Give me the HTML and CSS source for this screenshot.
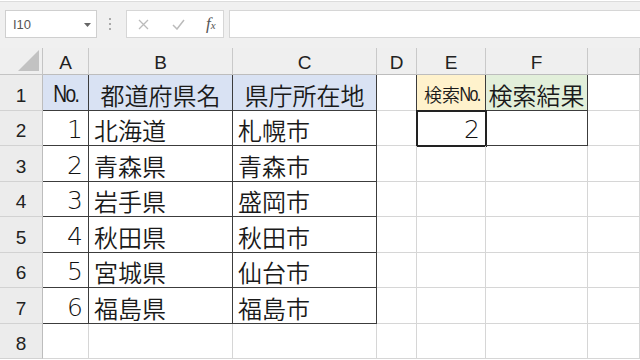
FILE: index.html
```html
<!DOCTYPE html>
<html lang="ja">
<head>
  <meta charset="UTF-8">
  <title>検索シート</title>
  <link rel="stylesheet" href="styles.css">
</head>
<body>

  <div class="toolbar">
    <div class="namebox">
      <span>I10</span>
      <svg class="caret" width="7" height="4" viewBox="0 0 7 4"><polygon points="0,0 7,0 3.5,4" fill="#666"/></svg>
    </div>
    <div class="grip">
      <svg width="3" height="12" viewBox="0 0 3 12"><rect x="0" y="0" width="2" height="2" fill="#aaa"/><rect x="0" y="5" width="2" height="2" fill="#aaa"/><rect x="0" y="10" width="2" height="2" fill="#aaa"/></svg>
    </div>
    <div class="fbtns">
      <svg width="11" height="11" viewBox="0 0 11 11"><path d="M1 1 L10 10 M10 1 L1 10" stroke="#bbb" stroke-width="1.3" fill="none"/></svg>
      <svg width="13" height="11" viewBox="0 0 13 11"><path d="M1 6 L5 10 L12 1" stroke="#bbb" stroke-width="1.5" fill="none"/></svg>
      <span class="fx">f<small>x</small></span>
    </div>
    <div class="formula"></div>
  </div>

  <div class="sheet">
    <!-- header -->
    <div class="corner"><div class="tri"></div></div>
    <div class="hd">A</div>
    <div class="hd">B</div>
    <div class="hd">C</div>
    <div class="hd">D</div>
    <div class="hd">E</div>
    <div class="hd">F</div>
    <div class="hd"></div>

    <!-- row 1 -->
    <div class="rh">1</div>
    <div class="c t blue ctr"><span class="no">No.</span></div>
    <div class="c t blue ctr">都道府県名</div>
    <div class="c t blue ctr">県庁所在地</div>
    <div class="c dr"></div>
    <div class="c t yellow ctr small">検索<span class="no">No.</span></div>
    <div class="c t green ctr">検索結果</div>
    <div class="c"></div>

    <!-- row 2 -->
    <div class="rh">2</div>
    <div class="c t num">1</div>
    <div class="c t">北海道</div>
    <div class="c t">札幌市</div>
    <div class="c dr"></div>
    <div class="c t num sel">2</div>
    <div class="c t"></div>
    <div class="c"></div>

    <div class="rh">3</div>
    <div class="c t num">2</div>
    <div class="c t">青森県</div>
    <div class="c t">青森市</div>
    <div class="c"></div><div class="c"></div><div class="c"></div><div class="c"></div>

    <div class="rh">4</div>
    <div class="c t num">3</div>
    <div class="c t">岩手県</div>
    <div class="c t">盛岡市</div>
    <div class="c"></div><div class="c"></div><div class="c"></div><div class="c"></div>

    <div class="rh">5</div>
    <div class="c t num">4</div>
    <div class="c t">秋田県</div>
    <div class="c t">秋田市</div>
    <div class="c"></div><div class="c"></div><div class="c"></div><div class="c"></div>

    <div class="rh">6</div>
    <div class="c t num">5</div>
    <div class="c t">宮城県</div>
    <div class="c t">仙台市</div>
    <div class="c"></div><div class="c"></div><div class="c"></div><div class="c"></div>

    <div class="rh">7</div>
    <div class="c t num">6</div>
    <div class="c t">福島県</div>
    <div class="c t">福島市</div>
    <div class="c"></div><div class="c"></div><div class="c"></div><div class="c"></div>

    <div class="rh">8</div>
    <div class="c"></div><div class="c"></div><div class="c"></div><div class="c"></div>
    <div class="c"></div><div class="c"></div><div class="c"></div>
  </div>

</body>
</html>
```

FILE: styles.css
```css
* { box-sizing: border-box; }
html, body { margin: 0; width: 640px; height: 360px; overflow: hidden; background: #fff; }
body { font-family: "Noto Sans CJK JP", "Noto Sans", sans-serif; color: #222; }

/* formula bar area */
.toolbar { height: 48px; background: #f0f0f0; border-top: 1px solid #dcdcdc; margin-top: 1px; display: flex; align-items: flex-start; padding: 8px 0 0 5px; }
.namebox { width: 92px; height: 28px; background: #fff; border: 1px solid #cfcfcf; display: flex; align-items: center; justify-content: space-between; padding: 0 5px 0 7px; font-family: "Liberation Sans", sans-serif; font-size: 13px; color: #555; }
.caret { margin-top: 1px; }
.grip { width: 29px; height: 28px; display: flex; align-items: center; justify-content: center; padding-right: 3px; }
.fbtns { width: 98px; height: 28px; background: #fff; border: 1px solid #d6d6d6; display: flex; align-items: center; padding-left: 11px; gap: 23px; }
.fx { font-family: "Liberation Serif", serif; font-style: italic; font-size: 17px; color: #555; margin-left: -2px; }
.fx small { font-size: 11px; }
.formula { flex: 1; height: 28px; background: #fff; border: 1px solid #d6d6d6; margin-left: 5px; margin-right: -2px; }

/* grid */
.sheet { display: grid; grid-template-columns: 43px 46px 144px 144px 40px 69px 102px 1fr; grid-template-rows: 27px 36px 35px 36px 35px 36px 35px 36px 35px; margin-top: -1px; }
.corner { background: #efefef; border-right: 1px solid #c4c4c4; border-bottom: 1px solid #c4c4c4; display: flex; justify-content: flex-end; align-items: flex-end; padding: 0 3px 3px 0; }
.tri { width: 21px; height: 21px; background: #c2c2c2; clip-path: polygon(100% 0, 100% 100%, 0 100%); }
.hd { background: #efefef; border-right: 1px solid #c9c9c9; border-bottom: 1px solid #bdbdbd; display: flex; align-items: center; justify-content: center; padding-top: 3px; font-family: "Liberation Sans", sans-serif; font-size: 19px; color: #222; }
.rh { background: #ececec; border-right: 1px solid #bdbdbd; border-bottom: 1px solid #d2d2d2; display: flex; align-items: center; justify-content: center; padding-top: 6px; font-family: "Liberation Sans", sans-serif; font-size: 19px; color: #222; }
.c { border-right: 1px solid #d6d6d6; border-bottom: 1px solid #d6d6d6; display: flex; align-items: center; padding: 3px 4px 0 5px; font-size: 24px; font-weight: 350; color: #1a1a1a; white-space: nowrap; overflow: hidden; }
.t { border-right-color: #3c3c3c; border-bottom-color: #3c3c3c; }
.dr { border-right-color: #3c3c3c; }
.ctr { justify-content: center; padding-left: 0; padding-right: 0; }
.num { justify-content: flex-end; font-family: "DejaVu Sans", sans-serif; font-weight: 300; font-size: 25px; color: #111; padding-right: 5px; }
.no { font-family: "Liberation Sans Narrow", "Liberation Sans", sans-serif; letter-spacing: -2px; transform: scaleX(0.8); display: inline-block; }
.small { font-size: 18px; }
.small .no { font-size: 20px; margin-left: -3px; margin-right: -4px; }
.blue { background: #d9e2f3; }
.yellow { background: #fff2cc; }
.green { background: #e2efda; }
.sel { outline: 2px solid #222; outline-offset: -1px; overflow: visible; }
```
